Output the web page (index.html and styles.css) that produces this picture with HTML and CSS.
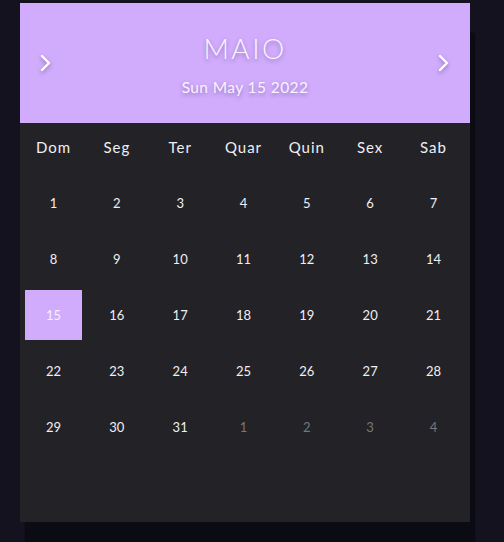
FILE: index.html
```html
<!DOCTYPE html>
<html lang="pt">
<head>
<meta charset="utf-8">
<link rel="stylesheet" href="styles.css">
</head>
<body>
<div class="page">
  <div class="calendar">
    <div class="header">
      <button class="arrow" aria-label="anterior">
        <svg width="14" height="20" viewBox="0 0 14 20"><polyline points="3,3 10,10 3,17" fill="none" stroke="#fff" stroke-width="2.4" stroke-linecap="round" stroke-linejoin="round"/></svg>
      </button>
      <div class="title">
        <div class="month">MAIO</div>
        <div class="date">Sun May 15 2022</div>
      </div>
      <button class="arrow" aria-label="próximo">
        <svg width="14" height="20" viewBox="0 0 14 20"><polyline points="3,3 10,10 3,17" fill="none" stroke="#fff" stroke-width="2.4" stroke-linecap="round" stroke-linejoin="round"/></svg>
      </button>
    </div>
    <div class="grid">
      <div class="wd">Dom</div><div class="wd">Seg</div><div class="wd">Ter</div><div class="wd">Quar</div><div class="wd">Quin</div><div class="wd">Sex</div><div class="wd">Sab</div>
      <div class="day">1</div><div class="day">2</div><div class="day">3</div><div class="day">4</div><div class="day">5</div><div class="day">6</div><div class="day">7</div>
      <div class="day">8</div><div class="day">9</div><div class="day">10</div><div class="day">11</div><div class="day">12</div><div class="day">13</div><div class="day">14</div>
      <div class="day selected">15</div><div class="day">16</div><div class="day">17</div><div class="day">18</div><div class="day">19</div><div class="day">20</div><div class="day">21</div>
      <div class="day">22</div><div class="day">23</div><div class="day">24</div><div class="day">25</div><div class="day">26</div><div class="day">27</div><div class="day">28</div>
      <div class="day">29</div><div class="day">30</div><div class="day">31</div><div class="day other">1</div><div class="day other">2</div><div class="day other">3</div><div class="day other">4</div>
    </div>
  </div>
</div>
</body>
</html>
```
FILE: styles.css
```css
html, body {
  margin: 0;
  padding: 0;
  background: #13121e;
  height: 100%;
  overflow: hidden;
}
.page {
  padding: 3px 0 0 20px;
  font-family: "Lato", "Noto Sans", sans-serif;
}
.calendar {
  width: 450px;
  height: 519px;
  background: #232227;
  box-shadow: 5px 30px 1px #0b0b14;
}
.header {
  height: 120px;
  background: #d1acfc;
  display: flex;
  align-items: center;
  justify-content: space-between;
  padding: 0 18px;
  box-sizing: border-box;
}
.arrow {
  background: none;
  border: 0;
  padding: 0;
  width: 16px;
  height: 22px;
  margin-top: 0;
  display: flex;
  align-items: center;
  justify-content: center;
  filter: drop-shadow(0 2px 2px rgba(60, 30, 110, 0.45));
}
.title {
  display: flex;
  flex-direction: column;
  align-items: center;
  color: #f8f3fe;
  text-shadow: 0 2px 4px rgba(70, 40, 120, 0.45);
  margin-top: 2px;
}
.month {
  font-size: 28px;
  letter-spacing: 2.5px;
  font-weight: 300;
  line-height: 34px;
}
.date {
  font-size: 15.5px;
  line-height: 20px;
  margin-top: 12px;
  font-weight: 400;
  letter-spacing: 0.4px;
}
.grid {
  display: grid;
  grid-template-columns: repeat(7, 57px);
  grid-auto-rows: 50px;
  row-gap: 6px;
  justify-content: space-between;
  padding: 0 8px 0 5px;
  margin-top: -1px;
}
.wd, .day {
  display: flex;
  align-items: center;
  justify-content: center;
  color: #f0eff3;
}
.wd {
  font-size: 15px;
  letter-spacing: 1px;
  font-weight: 400;
}
.day {
  font-size: 13px;
}
.day.selected {
  background: #d1acfc;
  color: #f6f0fd;
}
.day.other {
  color: #77767c;
}
```
